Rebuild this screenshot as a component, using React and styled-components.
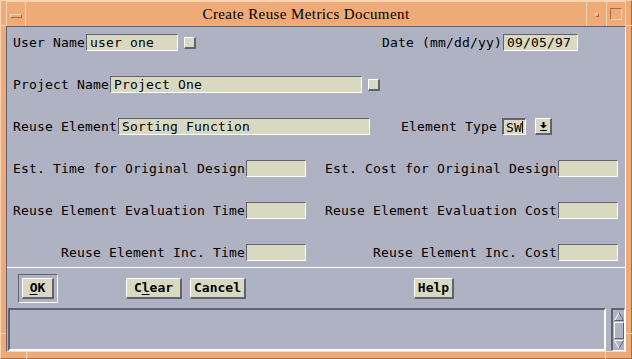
import React from 'react';
import styled, { createGlobalStyle } from 'styled-components';

const FRAME = '#eeaa77';
const FRAME_LIGHT = '#fbd6b6';
const FRAME_DARK = '#a86d44';
const PANEL = '#aeb2c3';
const FIELD = '#d9d9c1';
const SHADOW = '#60636f';
const MONO = '"DejaVu Sans Mono", "Liberation Mono", monospace';

const GlobalStyle = createGlobalStyle`
    html, body {
        margin: 0;
        padding: 0;
        background: ${FRAME};
    }
    * {
        box-sizing: border-box;
    }
`;

const App = () => {
    return (
        <>
            <GlobalStyle />
            <Window>
                <TitleBar>
                    <MenuButton><MenuGlyph /></MenuButton>
                    <Title>Create Reuse Metrics Document</Title>
                    <FrameButton><MinGlyph /></FrameButton>
                    <FrameButton $last><MaxGlyph /></FrameButton>
                </TitleBar>

                <Content>
                    <FormPanel>
                        <Row>
                            <Label>User Name</Label>
                            <Field $w={92}>user one</Field>
                            <Toggle />
                            <RightGroup $mr={41}>
                                <Label>Date (mm/dd/yy)</Label>
                                <Field $w={75}>09/05/97</Field>
                            </RightGroup>
                        </Row>
                        <Row>
                            <Label>Project Name</Label>
                            <Field $w={252}>Project One</Field>
                            <Toggle />
                        </Row>
                        <Row>
                            <Label>Reuse Element</Label>
                            <Field $w={252}>Sorting Function</Field>
                            <RightGroup $mr={67}>
                                <Label>Element Type</Label>
                                <Field $w={24} $ml={5} $focus>SW<Caret /></Field>
                                <DropButton>
                                    <svg width="7" height="9" viewBox="0 0 7 9">
                                        <rect x="2.5" y="0" width="2" height="3" fill="#000" />
                                        <polygon points="0,3 7,3 3.5,6.5" fill="#000" />
                                        <rect x="0" y="8" width="7" height="1" fill="#000" />
                                    </svg>
                                </DropButton>
                            </RightGroup>
                        </Row>
                        <PairRow>
                            <Cell>
                                <Label>Est. Time for Original Design</Label>
                                <Field $w={60} />
                            </Cell>
                            <Cell $pr={1}>
                                <Label>Est. Cost for Original Design</Label>
                                <Field $w={60} />
                            </Cell>
                        </PairRow>
                        <PairRow>
                            <Cell>
                                <Label>Reuse Element Evaluation Time</Label>
                                <Field $w={60} />
                            </Cell>
                            <Cell $pr={1}>
                                <Label>Reuse Element Evaluation Cost</Label>
                                <Field $w={60} />
                            </Cell>
                        </PairRow>
                        <PairRow>
                            <Cell>
                                <Label>Reuse Element Inc. Time</Label>
                                <Field $w={60} />
                            </Cell>
                            <Cell $pr={1}>
                                <Label>Reuse Element Inc. Cost</Label>
                                <Field $w={60} />
                            </Cell>
                        </PairRow>
                    </FormPanel>

                    <ButtonBar>
                        <DefaultFrame>
                            <PushButton $w={32}><Mnemonic>O</Mnemonic>K</PushButton>
                        </DefaultFrame>
                        <PushButton $w={56} $ml={68}>C<Mnemonic>l</Mnemonic>ear</PushButton>
                        <PushButton $w={56} $ml={8}>Cancel</PushButton>
                        <PushButton $w={40} $ml={168}>Help</PushButton>
                    </ButtonBar>

                    <MessageRow>
                        <MessageArea />
                        <ScrollBar>
                            <svg width="10" height="9" viewBox="0 0 10 9">
                                <polygon points="5,0.5 9.5,8.5 0.5,8.5" fill={PANEL} />
                                <line x1="5" y1="0.5" x2="0.5" y2="8.5" stroke="#fff" />
                                <line x1="5" y1="0.5" x2="9.5" y2="8.5" stroke={SHADOW} />
                                <line x1="0.5" y1="8.5" x2="9.5" y2="8.5" stroke={SHADOW} />
                            </svg>
                            <Thumb />
                            <svg width="10" height="9" viewBox="0 0 10 9">
                                <polygon points="0.5,0.5 9.5,0.5 5,8.5" fill={PANEL} />
                                <line x1="0.5" y1="0.5" x2="9.5" y2="0.5" stroke="#fff" />
                                <line x1="0.5" y1="0.5" x2="5" y2="8.5" stroke="#fff" />
                                <line x1="9.5" y1="0.5" x2="5" y2="8.5" stroke={SHADOW} />
                            </svg>
                        </ScrollBar>
                    </MessageRow>
                </Content>

                <HTick $x={-1} $y={24} />
                <HTick $x={-1} $y={332} />
                <HTick $x={625} $y={24} />
                <HTick $x={625} $y={332} />
                <VTick $x={25} $y={351} />
                <VTick $x={604} $y={351} />
            </Window>
        </>
    );
};

const Window = styled.div`
    position: relative;
    width: 632px;
    height: 359px;
    display: flex;
    flex-direction: column;
    padding: 0 5px 6px;
    background: ${FRAME};
    border: 1px solid;
    border-color: ${FRAME_LIGHT} ${FRAME_DARK} ${FRAME_DARK} ${FRAME_LIGHT};
`;

const TitleBar = styled.div`
    height: 25px;
    display: flex;
    align-items: stretch;
    border-top: 1px solid ${FRAME_LIGHT};
`;

const MenuButton = styled.div`
    width: 20px;
    display: flex;
    justify-content: center;
    align-items: center;
    padding-top: 3px;
    border-left: 1px solid ${FRAME_LIGHT};
    border-right: 1px solid ${FRAME_LIGHT};
`;

const MenuGlyph = styled.span`
    width: 12px;
    height: 4px;
    border: 1px solid;
    border-color: ${FRAME_LIGHT} ${FRAME_DARK} ${FRAME_DARK} ${FRAME_LIGHT};
`;

const Title = styled.div`
    flex: 1;
    display: flex;
    justify-content: center;
    align-items: center;
    padding-top: 1px;
    font-family: "Liberation Serif", "DejaVu Serif", serif;
    font-size: 15px;
    letter-spacing: 0.4px;
    color: #000;
`;

const FrameButton = styled.div`
    width: 20px;
    display: flex;
    justify-content: center;
    align-items: center;
    border-left: 1px solid ${FRAME_LIGHT};
    border-right: ${p => (p.$last ? `1px solid ${FRAME_LIGHT}` : 'none')};
`;

const MinGlyph = styled.span`
    width: 4px;
    height: 4px;
    margin-top: 2px;
    border: 1px solid;
    border-color: ${FRAME_LIGHT} ${FRAME_DARK} ${FRAME_DARK} ${FRAME_LIGHT};
`;

const MaxGlyph = styled.span`
    width: 12px;
    height: 12px;
    border: 1px solid;
    border-color: ${FRAME_DARK} ${FRAME_LIGHT} ${FRAME_LIGHT} ${FRAME_DARK};
`;

const HTick = styled.span`
    position: absolute;
    left: ${p => p.$x}px;
    top: ${p => p.$y}px;
    width: 6px;
    height: 1px;
    background: ${FRAME_LIGHT};
`;

const VTick = styled.span`
    position: absolute;
    left: ${p => p.$x}px;
    top: ${p => p.$y}px;
    width: 1px;
    height: 7px;
    background: ${FRAME_LIGHT};
`;

const Content = styled.div`
    height: 326px;
    display: flex;
    flex-direction: column;
    background: ${PANEL};
    border: 1px solid;
    border-color: ${SHADOW} #fff ${FRAME_LIGHT} ${SHADOW};
    font-family: ${MONO};
    font-size: 13px;
    color: #000;
`;

const FormPanel = styled.div`
    display: flex;
    flex-direction: column;
    gap: 25px;
    padding: 7px 6px 6px;
    border-bottom: 1px solid #fff;
`;

const Row = styled.div`
    height: 17px;
    display: flex;
    align-items: center;
`;

const RightGroup = styled.div`
    display: flex;
    align-items: center;
    margin-left: auto;
    margin-right: ${p => p.$mr}px;
`;

const PairRow = styled.div`
    height: 17px;
    display: grid;
    grid-template-columns: 293px 1fr;
`;

const Cell = styled.div`
    display: flex;
    justify-content: flex-end;
    align-items: center;
    padding-right: ${p => p.$pr || 0}px;
`;

const Label = styled.span`
    white-space: pre;
    letter-spacing: 0.17px;
    line-height: 17px;
`;

const Field = styled.div`
    width: ${p => p.$w}px;
    height: 17px;
    margin-left: ${p => (p.$ml !== undefined ? p.$ml : 1)}px;
    padding: ${p => (p.$focus ? '0 0 0 2px' : '0 3px')};
    display: flex;
    align-items: center;
    background: ${FIELD};
    border-style: solid;
    border-width: ${p => (p.$focus ? '2px 1px 1px 2px' : '1px')};
    border-color: ${SHADOW} #fff #fff ${SHADOW};
    white-space: pre;
    letter-spacing: 0.17px;
    overflow: hidden;
`;

const Caret = styled.span`
    flex: none;
    width: 1px;
    height: 12px;
    background: #000;
`;

const Toggle = styled.span`
    width: 12px;
    height: 12px;
    margin-left: 6px;
    background: ${FIELD};
    border-style: solid;
    border-width: 1px 2px 2px 1px;
    border-color: #fff ${SHADOW} ${SHADOW} #fff;
`;

const DropButton = styled.div`
    width: 17px;
    height: 17px;
    margin-left: 9px;
    display: flex;
    justify-content: center;
    align-items: center;
    background: ${FIELD};
    border-style: solid;
    border-width: 1px 2px 2px 1px;
    border-color: #fff ${SHADOW} ${SHADOW} #fff;
`;

const ButtonBar = styled.div`
    height: 40px;
    display: flex;
    align-items: center;
    padding-left: 11px;
`;

const DefaultFrame = styled.div`
    padding: 3px;
    border: 1px solid;
    border-color: ${SHADOW} #fff #fff ${SHADOW};
`;

const PushButton = styled.div`
    width: ${p => p.$w}px;
    height: 21px;
    margin-left: ${p => p.$ml || 0}px;
    display: flex;
    justify-content: center;
    align-items: center;
    background: ${FIELD};
    border-style: solid;
    border-width: 1px 2px 2px 1px;
    border-color: #fff ${SHADOW} ${SHADOW} #fff;
    font-weight: bold;
    font-size: 13px;
    white-space: pre;
`;

const Mnemonic = styled.span`
    text-decoration: underline;
    text-underline-offset: 2px;
`;

const MessageRow = styled.div`
    height: 43px;
    display: flex;
    padding-left: 1px;
`;

const MessageArea = styled.div`
    width: 598px;
    height: 43px;
    border: 2px solid;
    border-color: ${SHADOW} #fff #fff ${SHADOW};
`;

const ScrollBar = styled.div`
    width: 14px;
    height: 43px;
    margin-left: 5px;
    display: flex;
    flex-direction: column;
    align-items: center;
    gap: 1px;
    padding: 2px 0 1px;
    border-style: solid;
    border-width: 2px 1px 1px 2px;
    border-color: ${SHADOW} #fff #fff ${SHADOW};
`;

const Thumb = styled.div`
    width: 10px;
    flex: 1;
    border: 1px solid;
    border-color: #fff ${SHADOW} ${SHADOW} #fff;
`;

export default App;
